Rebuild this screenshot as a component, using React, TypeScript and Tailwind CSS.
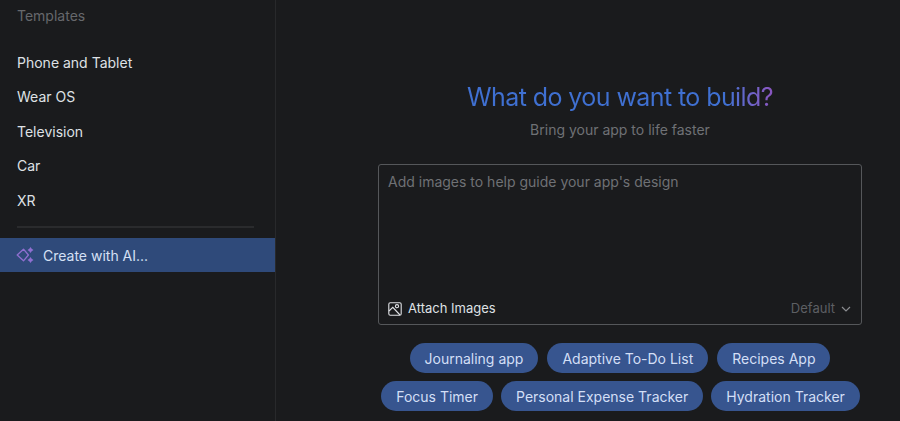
import React from "react";

const items = ["Phone and Tablet", "Wear OS", "Television", "Car", "XR"];
const row1 = ["Journaling app", "Adaptive To-Do List", "Recipes App"];
const row2 = ["Focus Timer", "Personal Expense Tracker", "Hydration Tracker"];

function Chip({ label }: { label: string }) {
  return (
    <div className="h-[30px] px-[15px] flex items-center rounded-full bg-[#37558f] text-[#d3dff6] text-[14px] whitespace-nowrap">
      {label}
    </div>
  );
}

function Sparkle() {
  return (
    <svg width="19" height="18" viewBox="0 0 19 18" fill="none">
      <path d="M7.5 3.2 L12.4 9 L7.5 14.8 L1.2 9 Z" stroke="#8f6fd0" strokeWidth="1.3" strokeLinejoin="round" />
      <path d="M14.5 1 L15.7 2.8 L17.5 4 L15.7 5.2 L14.5 7 L13.3 5.2 L11.5 4 L13.3 2.8 Z" fill="#8f6fd0" />
      <path d="M14.5 11 L15.7 12.8 L17.5 14 L15.7 15.2 L14.5 17 L13.3 15.2 L11.5 14 L13.3 12.8 Z" fill="#8f6fd0" />
    </svg>
  );
}

function ImageIcon() {
  return (
    <svg width="14" height="14" viewBox="0 0 14 14" fill="none" stroke="#dfe1e5" strokeWidth="1.1">
      <rect x="0.8" y="0.8" width="12.4" height="12.4" rx="1.5" />
      <circle cx="9" cy="4.2" r="1.6" />
      <path d="M1 9 L4.8 5.4 L12 13" />
    </svg>
  );
}

export default function App() {
  return (
    <div className="w-[900px] h-[421px] overflow-hidden flex bg-[#1a1b1d] font-['Inter','Liberation_Sans',sans-serif]">
      <aside className="w-[276px] shrink-0 border-r border-[#28292b] flex flex-col">
        <div className="pl-[17px] pt-[7px] h-[45px] text-[14px] leading-[17px] text-[#66686c]">Templates</div>
        {items.map((t) => (
          <div key={t} className="h-[34.5px] pl-[17px] flex items-center text-[14px] text-[#dfe1e5]">
            {t}
          </div>
        ))}
        <div className="mt-[8.5px] ml-[17px] w-[237px] h-[2px] bg-[#2a2b2d]" />
        <div className="mt-[10px] h-[34px] bg-[#2f4a7a] flex items-center pl-[16px] gap-[8px] text-[14px] text-[#d5e0f5]">
          <Sparkle />
          <span>Create with AI...</span>
        </div>
      </aside>
      <main className="flex-1 min-w-0 pl-[102px] pr-[38px] pt-[80px] flex flex-col items-center">
        <h1 className="text-[25px] leading-[34px] tracking-[-0.58px] whitespace-nowrap font-normal bg-gradient-to-r from-[#3f70d2] from-85% to-[#8a55c0] bg-clip-text text-transparent">
          What do you want to build?
        </h1>
        <p className="mt-[7px] text-[14px] leading-[18px] text-[#6f7175]">Bring your app to life faster</p>
        <div className="mt-[25px] w-[484px] h-[161px] shrink-0 border border-[#55575a] rounded-[3px] flex flex-col justify-between pl-[9px] pr-[10px] pt-[8px] pb-[7px]">
          <div className="text-[14px] leading-[17px] text-[#6f7175]">Add images to help guide your app's design</div>
          <div className="flex items-center justify-between h-[17px]">
            <div className="flex items-center gap-[6px] text-[13px] text-[#dfe1e5]">
              <ImageIcon />
              <span>Attach Images</span>
            </div>
            <div className="flex items-center gap-[6px] text-[13px] text-[#5d5f63]">
              <span>Default</span>
              <svg width="10" height="6" viewBox="0 0 10 6" fill="none" stroke="#8a8c90" strokeWidth="1.2">
                <path d="M1 1 L5 5 L9 1" />
              </svg>
            </div>
          </div>
        </div>
        <div className="mt-[18px] flex gap-[9px]">
          {row1.map((c) => <Chip key={c} label={c} />)}
        </div>
        <div className="mt-[8px] flex gap-[8px] pl-[1px]">
          {row2.map((c) => <Chip key={c} label={c} />)}
        </div>
      </main>
    </div>
  );
}
